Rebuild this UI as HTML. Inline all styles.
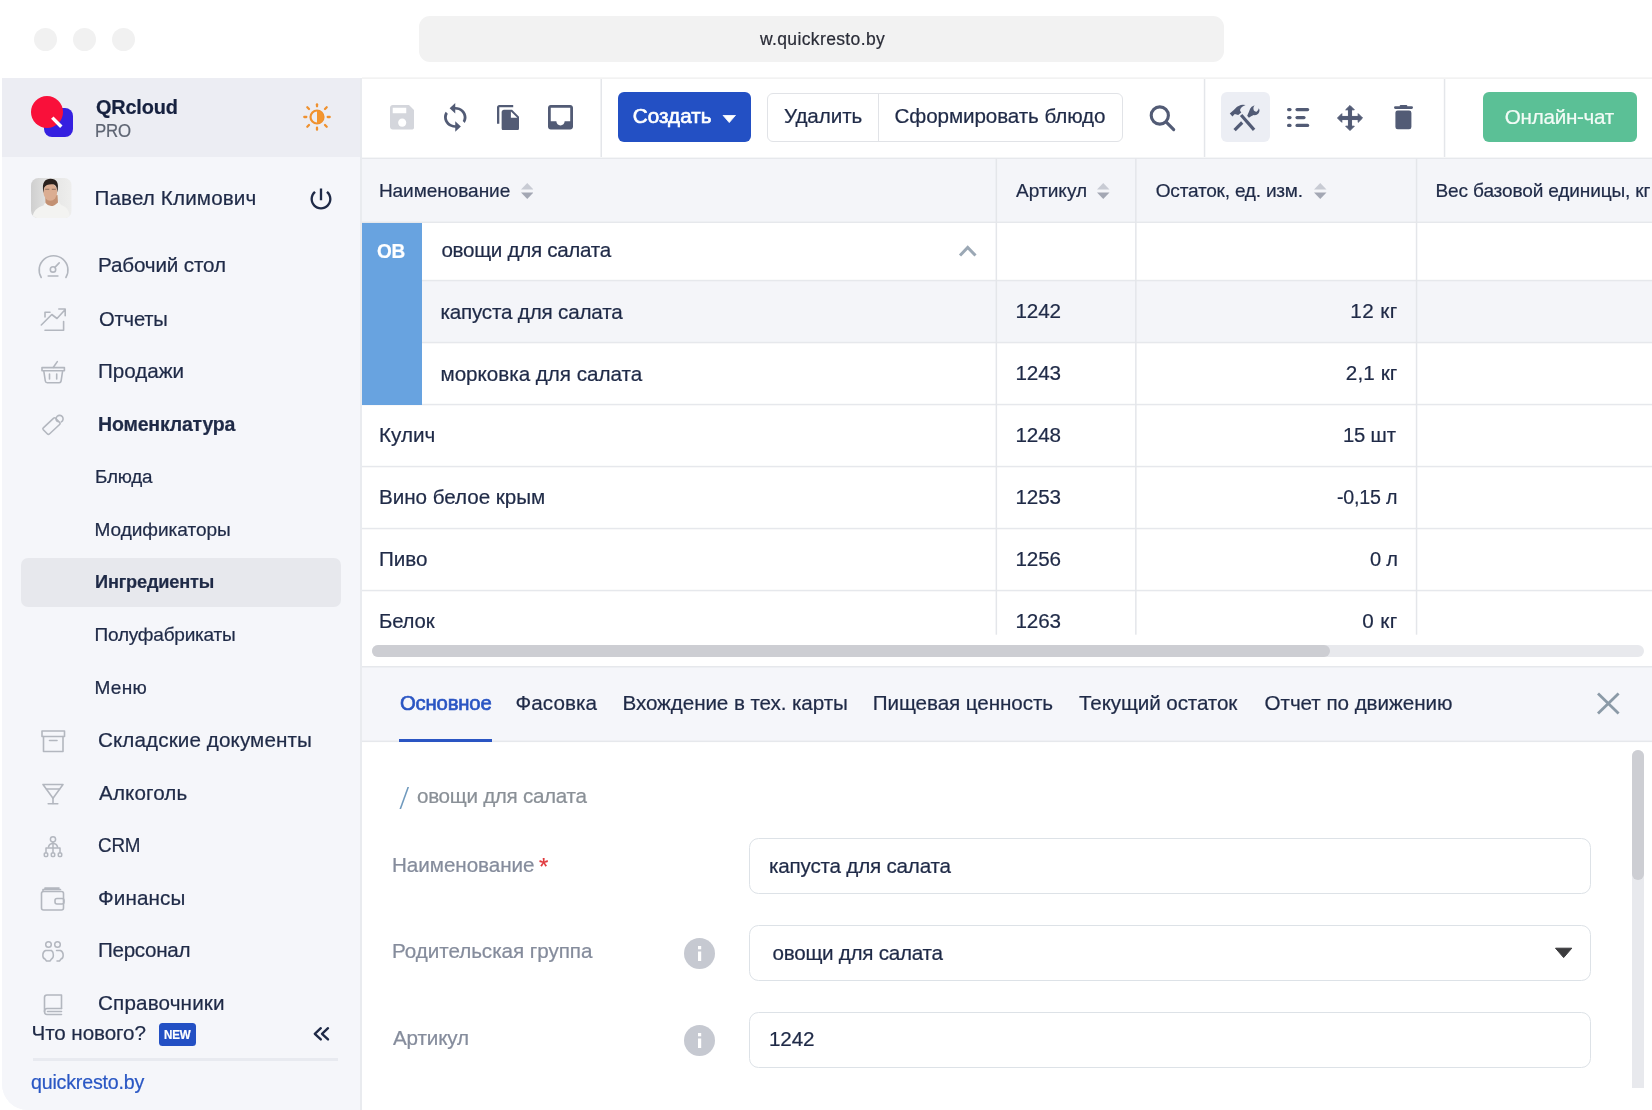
<!DOCTYPE html>
<html lang="ru">
<head>
<meta charset="utf-8">
<title>QRcloud PRO — Ингредиенты</title>
<style>
html,body{margin:0;padding:0;background:#fff;}
body{width:1652px;height:1110px;overflow:hidden;font-family:"Liberation Sans",sans-serif;}
#page{position:relative;width:1652px;height:1110px;overflow:hidden;background:#fff;}
#page div,#page svg{position:absolute;box-sizing:border-box;}
.t{position:absolute;transform-origin:0 50%;-webkit-text-stroke:0.22px currentColor;white-space:pre;line-height:1;font-family:"Liberation Sans",sans-serif;}
.dot{width:23px;height:23px;border-radius:50%;background:#f1f1f1;top:28px;}
.hl{background:#e6e8ec;}
.vl{background:#e4e6ea;width:1.5px;}
.inp{left:749.1px;width:842px;height:55.8px;border:1.5px solid #dde2e7;border-radius:9.5px;background:#fff;}
.info{width:31px;height:31px;border-radius:50%;background:#c6c9d1;}
#page #txt{left:0;top:0;width:1652px;height:1110px;will-change:transform;}

</style>
</head>
<body>
<div id="page">
<!-- browser chrome -->
<div class="dot" style="left:34.25px"></div>
<div class="dot" style="left:73px"></div>
<div class="dot" style="left:111.5px"></div>
<div style="left:419px;top:15.5px;width:805px;height:46.5px;border-radius:11px;background:#f2f2f2"></div>

<!-- sidebar -->
<div style="left:2px;top:78px;width:358px;height:1032px;background:#f5f6fa;border-bottom-left-radius:26px"></div>
<div style="left:2px;top:78px;width:358px;height:78.8px;background:#ecedf3"></div>
<div style="left:360px;top:78px;width:2px;height:1032px;background:#e9ebef"></div>
<!-- logo -->
<div style="left:44px;top:108.2px;width:28.6px;height:29.2px;border-radius:8px;background:#3520e0"></div>
<div style="left:30.6px;top:95.8px;width:32px;height:32px;border-radius:50%;background:#f9103a"></div>
<svg style="left:30px;top:90px" width="50" height="50" viewBox="30 90 50 50"><line x1="52.3" y1="117.6" x2="61.3" y2="126.8" stroke="#fff" stroke-width="3.4" stroke-linecap="butt"/></svg>
<!-- sun -->
<svg style="left:300px;top:100px" width="34" height="34" viewBox="-17 -17 34 34">
 <g stroke="#ef912f" stroke-width="2.300" stroke-linecap="round" fill="none">
  <line x1="0" y1="-10.700" x2="0" y2="-12.700"/><line x1="0" y1="10.700" x2="0" y2="12.700"/>
  <line x1="-10.700" y1="0" x2="-12.700" y2="0"/><line x1="10.700" y1="0" x2="12.700" y2="0"/>
  <line x1="8" y1="-8" x2="9.700" y2="-9.700"/><line x1="-8" y1="-8" x2="-9.700" y2="-9.700"/>
  <line x1="8" y1="8" x2="9.700" y2="9.700"/><line x1="-8" y1="8" x2="-9.700" y2="9.700"/>
 </g>
 <circle cx="0" cy="0" r="6.5" fill="none" stroke="#ef912f" stroke-width="2.2"/>
 <path d="M0 -6.5A6.5 6.5 0 0 1 0 6.5Z" fill="#f3952f"/>
</svg>
<!-- avatar -->
<svg style="left:31.400px;top:177.900px" width="40.700" height="40.200" viewBox="0 0 40.700 40.200">
 <defs><clipPath id="av"><rect x="0" y="0" width="40.700" height="40.200" rx="7.500"/></clipPath>
 <linearGradient id="avbg" x1="0" y1="0" x2="1" y2="0"><stop offset="0" stop-color="#cfcfcf"/><stop offset="0.450" stop-color="#e4e4e3"/><stop offset="1" stop-color="#eeeeed"/></linearGradient></defs>
 <g clip-path="url(#av)">
  <rect width="40.700" height="40.200" fill="url(#avbg)"/>
  <path d="M1.500 40.200C2 33 6 29.500 12.500 27.500L14.500 24L27.500 23L30 27C36 29 38.500 33 39 40.200Z" fill="#f3f3f1"/>
  <path d="M14.300 18L14.500 25Q20 31.500 27 24.500L26.500 17Z" fill="#c39173"/>
  <ellipse cx="19.300" cy="14" rx="6.900" ry="8.700" fill="#dbad92"/>
  <path d="M12.500 15C10.300 4 14.500 0.800 19.500 0.800C25.500 0.800 28.500 4.500 26.300 14.500C26.200 9.500 24.800 6.600 22 6.300C18 6 14.500 6.800 13 10Z" fill="#2a211e"/>
  <path d="M14.200 11.300H18.300M20.800 11.300H24.800" stroke="#8a6a58" stroke-width="0.900"/>
 </g>
</svg>
<!-- power -->
<svg style="left:306.5px;top:185px" width="28" height="28" viewBox="0 0 24 24"><path fill="#1f2a47" d="M13 3h-2v10h2V3zm4.830 2.170l-1.420 1.420C17.990 7.860 19 9.810 19 12c0 3.870-3.130 7-7 7s-7-3.130-7-7c0-2.190 1.010-4.140 2.580-5.420L6.170 5.170C4.230 6.820 3 9.260 3 12c0 4.970 4.030 9 9 9s9-4.030 9-9c0-2.740-1.230-5.180-3.170-6.830z"/></svg>

<!-- sidebar icons -->
<svg style="left:36px;top:252px" width="36" height="28" viewBox="36 252 36 28" fill="none" stroke="#b3b7bf" stroke-width="1.600" stroke-linecap="round">
 <path d="M41.200 277.500A14.400 14.400 0 1 1 65.900 277.500"/>
 <circle cx="53" cy="269.400" r="2.700"/><line x1="54.900" y1="267.400" x2="59.200" y2="262.900"/><line x1="48.200" y1="276" x2="57.900" y2="276"/>
</svg>
<svg style="left:38px;top:304px" width="32" height="30" viewBox="38 304 32 30" fill="none" stroke="#b3b7bf" stroke-width="1.600" stroke-linecap="round" stroke-linejoin="round">
 <path d="M41.300 325L51.800 314.500L57 318.500L64.800 310M58.800 309H65.200V315.800"/>
 <path d="M45 330.200H63.600V321.500"/><path d="M45 317V312.200H50"/>
</svg>
<svg style="left:38px;top:358px" width="32" height="30" viewBox="38 358 32 30" fill="none" stroke="#b3b7bf" stroke-width="1.600" stroke-linecap="round" stroke-linejoin="round">
 <path d="M42 367.600H64.400V370.800H42Z"/><path d="M43.800 371L45.300 381C45.500 382.200 46 382.700 47.200 382.700H59.200C60.400 382.700 60.900 382.200 61.100 381L62.600 371"/>
 <line x1="49.500" y1="374" x2="49.500" y2="379"/><line x1="56.700" y1="374" x2="56.700" y2="379"/><line x1="53.400" y1="367.300" x2="57.300" y2="361.600"/>
</svg>
<svg style="left:38px;top:410px" width="32" height="30" viewBox="38 410 32 30" fill="none" stroke="#b3b7bf" stroke-width="1.600" stroke-linecap="round" stroke-linejoin="round">
 <path d="M43.300 427.800L53.700 418.200Q54.700 417.300 55.600 418.200L59.700 422.600Q60.600 423.600 59.600 424.500L49.400 434Q48.400 434.900 47.500 434L43.300 429.700Q42.400 428.700 43.300 427.800Z"/>
 <path d="M57.300 421.500A3.500 3.500 0 1 1 61.300 421.900"/>
</svg>
<svg style="left:38px;top:726px" width="32" height="30" viewBox="38 726 32 30" fill="none" stroke="#b3b7bf" stroke-width="1.6" stroke-linecap="round" stroke-linejoin="round">
 <rect x="42" y="731" width="22.500" height="5.500"/><path d="M43.500 736.500V751.500H63V736.500"/><line x1="49.500" y1="740.500" x2="57" y2="740.500"/>
</svg>
<svg style="left:38px;top:780px" width="32" height="30" viewBox="38 780 32 30" fill="none" stroke="#b3b7bf" stroke-width="1.600" stroke-linecap="round" stroke-linejoin="round">
 <path d="M43 784.500H63L53 798.300Z"/><line x1="53" y1="798.300" x2="53" y2="803.500"/><line x1="48.200" y1="803.800" x2="57.800" y2="803.800"/><line x1="46.500" y1="789" x2="59.500" y2="789"/>
</svg>
<svg style="left:38px;top:832px" width="32" height="30" viewBox="38 832 32 30" fill="none" stroke="#b3b7bf" stroke-width="1.500" stroke-linecap="round" stroke-linejoin="round">
 <circle cx="53" cy="839.300" r="2.600"/><path d="M53 842V848M46 852.500V848H60V852.500M53 848V852.500"/>
 <path d="M48.500 847C49 844.500 51 843.500 53 843.500C55 843.500 57 844.500 57.500 847"/>
 <rect x="44.300" y="853" width="3.400" height="3.400" rx="0.800"/><rect x="51.300" y="853" width="3.400" height="3.400" rx="0.800"/><rect x="58.300" y="853" width="3.400" height="3.400" rx="0.800"/>
</svg>
<svg style="left:38px;top:884px" width="32" height="30" viewBox="38 884 32 30" fill="none" stroke="#b3b7bf" stroke-width="1.600" stroke-linecap="round" stroke-linejoin="round">
 <rect x="41.500" y="891.500" width="22" height="18.500" rx="2"/><path d="M43 891.500V889.500H60.500M45 889.500V888H59"/>
 <rect x="55" y="898.500" width="9" height="5.500" rx="2"/>
</svg>
<svg style="left:38px;top:937px" width="32" height="30" viewBox="38 937 32 30" fill="none" stroke="#b3b7bf" stroke-width="1.500" stroke-linecap="round" stroke-linejoin="round">
 <circle cx="48.500" cy="944.500" r="2.800"/><circle cx="57.500" cy="944.500" r="2.800"/>
 <path d="M45 959C42 958 42 952 45.500 950.500H51.500C54 952 54 958 51.500 959L50 961H46.500Z"/>
 <path d="M56.500 950.500H60.500C64 952 64 958 61 959L59.500 961H57"/>
</svg>
<svg style="left:38px;top:990px" width="32" height="30" viewBox="38 990 32 30" fill="none" stroke="#b3b7bf" stroke-width="1.600" stroke-linecap="round" stroke-linejoin="round">
 <path d="M61.500 1008.500V995H47C45.500 995 44.500 996 44.500 997.500V1011.500"/><path d="M61.500 1008.500H47C43.700 1008.500 43.700 1014.500 47 1014.500H61.500M47.500 1011.500H61.500"/>
</svg>
<!-- active submenu highlight -->
<div style="left:21px;top:558px;width:320px;height:49px;border-radius:7px;background:#e7e8ed"></div>
<!-- sidebar footer -->
<div style="left:2px;top:1016px;width:358px;height:94px;background:#f5f6fa;border-bottom-left-radius:26px"></div>
<div style="left:158.500px;top:1023px;width:37.300px;height:22.800px;border-radius:3.500px;background:#2350c4"></div>
<svg style="left:310px;top:1023px" width="24" height="22" viewBox="310 1023 24 22" fill="none" stroke="#1f2a47" stroke-width="2.400" stroke-linecap="round" stroke-linejoin="round">
 <path d="M320.800 1028.200L314.800 1033.800L320.800 1039.400"/><path d="M328 1028.200L322 1033.800L328 1039.400"/>
</svg>
<div style="left:32.500px;top:1058.300px;width:305px;height:2.600px;background:#e8eaf0"></div>

<!-- toolbar -->
<!-- save (disabled) : material bbox 3..21 -->
<svg style="left:389.600px;top:105px" width="24.400" height="24.500" viewBox="3 3 18 18" preserveAspectRatio="none"><path fill="#d4d6dc" d="M17 3H5c-1.110 0-2 .9-2 2v14c0 1.100.890 2 2 2h14c1.100 0 2-.9 2-2V7l-4-4zm-5 16c-1.660 0-3-1.340-3-3s1.340-3 3-3 3 1.340 3 3-1.340 3-3 3zm3-10H5V5h10v4z"/></svg>
<!-- sync : bbox x4..20 y1..23 -->
<svg style="left:444px;top:103.300px" width="22.500" height="28.700" viewBox="4 1 16 22" preserveAspectRatio="none"><path fill="#525b75" d="M12 4V1L8 5l4 4V6c3.310 0 6 2.690 6 6 0 1.010-.25 1.970-.7 2.800l1.460 1.460C19.540 15.030 20 13.570 20 12c0-4.420-3.580-8-8-8zm0 14c-3.310 0-6-2.690-6-6 0-1.010.25-1.970.7-2.800L5.240 7.740C4.460 8.970 4 10.430 4 12c0 4.420 3.580 8 8 8v3l4-4-4-4v3z"/></svg>
<!-- file copy : bbox x2..21 y1..23 -->
<svg style="left:497.200px;top:104.600px" width="22" height="25.700" viewBox="2 1 19 22" preserveAspectRatio="none"><path fill="#525b75" d="M16 1H4c-1.100 0-2 .9-2 2v14h2V3h12V1zm-1 4l6 6v10c0 1.100-.9 2-2 2H7.990C6.890 23 6 22.100 6 21l.010-14c0-1.100.890-2 1.990-2h7zm-1 7h5.500L14 6.500V12z"/></svg>
<!-- inbox : bbox 3..21 -->
<svg style="left:547.500px;top:105px" width="25" height="24.500" viewBox="3 3 18 18" preserveAspectRatio="none"><path fill="#525b75" d="M19 3H4.990c-1.110 0-1.980.9-1.980 2L3 19c0 1.100.880 2 1.990 2H19c1.100 0 2-.9 2-2V5c0-1.100-.9-2-2-2zm0 12h-4c0 1.660-1.350 3-3 3s-3-1.340-3-3H4.990V5H19v10z"/></svg>
<!-- create button -->
<div style="left:617.500px;top:92px;width:133.200px;height:50px;border-radius:6px;background:#2350c4"></div>
<svg style="left:721.500px;top:114.500px" width="14.500" height="8" viewBox="0 0 14.500 8"><path d="M1 0.300H13.500L7.250 7.600Z" fill="#fff" stroke="#fff" stroke-width="0.800" stroke-linejoin="round"/></svg>
<!-- button group -->
<div style="left:767px;top:93px;width:355.500px;height:48.800px;border:1.500px solid #e1e3e7;border-radius:6px;background:#fff"></div>
<div style="left:877.700px;top:93.500px;width:1.400px;height:48px;background:#e1e3e7"></div>
<!-- search : -->
<svg style="left:1146px;top:102px" width="32" height="32" viewBox="1146 102 32 32" fill="none" stroke="#525b75" stroke-width="3.100" stroke-linecap="round"><circle cx="1159.800" cy="115.500" r="8.600"/><line x1="1166.300" y1="122.200" x2="1173.700" y2="129.700"/></svg>
<!-- tools bg + icon -->
<div style="left:1220.600px;top:92px;width:49.400px;height:50px;border-radius:6px;background:#eceef4"></div>
<svg style="left:1222px;top:98px" width="46" height="40" viewBox="1222 98 46 40" fill="#525b75" stroke="none">
 <path d="M1229.750 113.500L1232.450 116.500L1234.800 114L1238.200 115L1241.300 112.400Q1239.500 110.500 1240.200 109.500Q1241 107 1245.600 105.100Q1243 104.600 1240.750 105Q1237 106 1233.500 110.200Z"/>
 <path d="M1247.200 115.700Q1249 112 1250.100 108.800Q1251 106.500 1254.600 105.200Q1252.800 107.500 1253.400 108.800Q1253.600 110.500 1254.400 111Q1255.500 111.900 1256.600 111.700Q1258.300 111 1258.800 108.300Q1260 110 1259.300 111.700Q1258.800 113.500 1257.500 114.200Q1256 115.300 1253.700 115.100Q1251 116.200 1248.900 117.800Z"/>
 <g stroke="#525b75" stroke-width="3.200" stroke-linecap="butt"><line x1="1241.100" y1="115" x2="1254.100" y2="129.900"/><line x1="1234.600" y1="130.100" x2="1242.200" y2="122.500"/></g>
</svg>
<!-- list icon -->
<svg style="left:1286px;top:106px" width="25" height="24" viewBox="1286 106 25 24" fill="none" stroke="#525b75" stroke-width="3.200" stroke-linecap="round">
 <line x1="1288.600" y1="109.600" x2="1290" y2="109.600"/><line x1="1297" y1="109.600" x2="1307.600" y2="109.600"/>
 <line x1="1288.600" y1="117.600" x2="1290" y2="117.600"/><line x1="1297" y1="117.600" x2="1304" y2="117.600"/>
 <line x1="1288.600" y1="125.400" x2="1290" y2="125.400"/><line x1="1297" y1="125.400" x2="1307.600" y2="125.400"/>
</svg>
<!-- move icon -->
<svg style="left:1334.900px;top:102.900px" width="30" height="30" viewBox="-15 -15 30 30">
 <g fill="#525b75" stroke="#525b75" stroke-width="1" stroke-linejoin="round">
  <rect x="-9" y="-1.550" width="18" height="3.100"/><rect x="-1.550" y="-9" width="3.100" height="18"/>
  <path d="M0 -12.500L4.300 -8.200H-4.300Z"/><path d="M0 12.500L4.300 8.200H-4.300Z"/><path d="M-12.500 0L-8.200 -4.300V4.300Z"/><path d="M12.500 0L8.200 -4.300V4.300Z"/>
 </g>
</svg>
<!-- trash : bbox x5..19 y3..21 -->
<svg style="left:1390px;top:102px" width="28" height="30" viewBox="1390 102 28 30" fill="#525b75">
 <rect x="1394" y="106.200" width="19" height="2.700" rx="1.350"/><rect x="1399.700" y="104.900" width="7.600" height="2.600" rx="1"/>
 <rect x="1395.400" y="110.500" width="16" height="18.800" rx="2.300"/>
</svg>
<!-- chat button -->
<div style="left:1482.600px;top:92px;width:154.800px;height:50px;border-radius:6px;background:#5bc096"></div>

<!-- table -->
<div style="left:362px;top:158.800px;width:1290px;height:63.300px;background:#f4f5f9"></div>
<div style="left:362px;top:281px;width:1290px;height:61.500px;background:#f4f5f9"></div>
<!-- sort icons -->
<svg style="left:520.500px;top:183px" width="12.500" height="16" viewBox="0 0 12.500 16"><path d="M6.250 0L12.500 6.500H0Z" fill="#c8cbd4"/><path d="M6.250 16L12.500 9.500H0Z" fill="#a3a7b4"/></svg>
<svg style="left:1097.300px;top:183px" width="12.500" height="16" viewBox="0 0 12.500 16"><path d="M6.250 0L12.500 6.500H0Z" fill="#c8cbd4"/><path d="M6.250 16L12.500 9.500H0Z" fill="#a3a7b4"/></svg>
<svg style="left:1314.300px;top:183px" width="12.500" height="16" viewBox="0 0 12.500 16"><path d="M6.250 0L12.500 6.500H0Z" fill="#c8cbd4"/><path d="M6.250 16L12.500 9.500H0Z" fill="#a3a7b4"/></svg>
<!-- chevron up -->
<svg style="left:956px;top:241px" width="24" height="20" viewBox="956 241 24 20" fill="none" stroke="#9ba8b5" stroke-width="3" stroke-linecap="butt" stroke-linejoin="miter"><path d="M960 255.500L967.700 247.500L975.500 255.500"/></svg>
<!-- h scrollbar -->
<div style="left:372px;top:645px;width:1271.500px;height:12px;border-radius:6px;background:#e8e9ed"></div>
<div style="left:372px;top:645px;width:958.300px;height:12px;border-radius:6px;background:#cdced3"></div>

<!-- tabs -->
<div style="left:362px;top:666.500px;width:1290px;height:75px;background:#f5f6fa"></div>
<!-- hairlines (svg so that fractional positions antialias) -->
<svg style="left:0;top:0" width="1652" height="1110" viewBox="0 0 1652 1110">
 <rect x="362.00" y="77.50" width="1290.00" height="1.20" fill="#ededed"/>
 <rect x="362.00" y="157.60" width="1290.00" height="1.40" fill="#e6e8ec"/>
 <rect x="600.50" y="79.00" width="1.50" height="78.00" fill="#e4e6ea"/>
 <rect x="1203.80" y="79.00" width="1.50" height="78.00" fill="#e4e6ea"/>
 <rect x="1443.80" y="79.00" width="1.50" height="78.00" fill="#e4e6ea"/>
 <rect x="362.00" y="221.60" width="1290.00" height="1.40" fill="#e6e8ec"/>
 <rect x="422.00" y="279.80" width="1230.00" height="1.50" fill="#e6e8ec"/>
 <rect x="422.00" y="341.80" width="1230.00" height="1.50" fill="#e6e8ec"/>
 <rect x="362.00" y="403.80" width="1290.00" height="1.50" fill="#e6e8ec"/>
 <rect x="362.00" y="465.80" width="1290.00" height="1.50" fill="#e6e8ec"/>
 <rect x="362.00" y="527.80" width="1290.00" height="1.50" fill="#e6e8ec"/>
 <rect x="362.00" y="589.80" width="1290.00" height="1.50" fill="#e6e8ec"/>
 <rect x="995.60" y="158.40" width="1.50" height="476.30" fill="#e4e6ea"/>
 <rect x="1135.10" y="158.40" width="1.50" height="476.30" fill="#e4e6ea"/>
 <rect x="1415.80" y="158.40" width="1.50" height="476.30" fill="#e4e6ea"/>
 <rect x="362.00" y="666.00" width="1290.00" height="1.50" fill="#e6e8ec"/>
 <rect x="362.00" y="740.60" width="1290.00" height="1.50" fill="#e6e8ec"/>
</svg>
<div style="left:362px;top:222.600px;width:60px;height:182.200px;background:#68a3e0"></div>
<div style="left:399px;top:738.800px;width:92.800px;height:3.200px;background:#2a55c3"></div>
<svg style="left:1594px;top:689px" width="28" height="28" viewBox="1594 689 28 28" fill="none" stroke="#8b9aa7" stroke-width="2.800" stroke-linecap="butt"><line x1="1598" y1="693.400" x2="1618.600" y2="713.400"/><line x1="1618.600" y1="693.400" x2="1598" y2="713.400"/></svg>

<!-- form -->
<div class="inp" style="top:838px"></div>
<div class="inp" style="top:925px"></div>
<div class="inp" style="top:1012px"></div>
<svg style="left:1554px;top:946px" width="20" height="14" viewBox="1554 946 20 14"><path d="M1555.500 948.200H1571.800L1563.650 957.600Z" fill="#3b3b3d" stroke="#3b3b3d" stroke-width="1" stroke-linejoin="round"/></svg>
<div class="info" style="left:684px;top:937.500px"></div>
<div class="info" style="left:684px;top:1024.500px"></div>
<svg style="left:684px;top:937.500px" width="31" height="31" viewBox="0 0 31 31"><rect x="14" y="13.500" width="3.200" height="9.500" fill="#fff"/><rect x="14" y="8" width="3.200" height="3.300" fill="#fff"/></svg>
<svg style="left:684px;top:1024.500px" width="31" height="31" viewBox="0 0 31 31"><rect x="14" y="13.500" width="3.200" height="9.500" fill="#fff"/><rect x="14" y="8" width="3.200" height="3.300" fill="#fff"/></svg>
<!-- v scrollbar -->
<div style="left:1631.500px;top:750px;width:12px;height:338px;border-radius:6px 6px 0 0;background:#e8e9ed"></div>
<div style="left:1631.500px;top:750px;width:12px;height:129.500px;border-radius:6px;background:#cdced3"></div>

<!-- text layer -->
<div id="txt">
<span class="t" style="top:31.12px;font-size:17.5px;color:#2b2d38;letter-spacing:0.365px;left:760.00px;">w.quickresto.by</span>
<span class="t" style="top:96.40px;font-size:21px;color:#16213f;letter-spacing:-0.200px;font-weight:bold;left:95.50px;transform:scaleX(0.9477);">QRcloud</span>
<span class="t" style="top:121.05px;font-size:19.06px;color:#5d6472;letter-spacing:-0.200px;left:94.62px;transform:scaleX(0.8833);">PRO</span>
<span class="t" style="top:188.45px;font-size:20.65px;color:#1f2a47;letter-spacing:0.124px;left:94.50px;">Павел Климович</span>
<span class="t" style="top:255.45px;font-size:20.65px;color:#1f2a47;letter-spacing:-0.139px;left:98.00px;">Рабочий стол</span>
<span class="t" style="top:308.70px;font-size:20.65px;color:#1f2a47;letter-spacing:-0.200px;left:99.00px;transform:scaleX(0.9783);">Отчеты</span>
<span class="t" style="top:361.45px;font-size:20.65px;color:#1f2a47;letter-spacing:-0.028px;left:98.00px;">Продажи</span>
<span class="t" style="top:414.45px;font-size:20.65px;color:#1f2a47;letter-spacing:-0.200px;font-weight:bold;left:98.05px;transform:scaleX(0.9457);">Номенклатура</span>
<span class="t" style="top:729.95px;font-size:20.65px;color:#1f2a47;letter-spacing:0.099px;left:98.00px;">Складские документы</span>
<span class="t" style="top:782.95px;font-size:20.65px;color:#1f2a47;letter-spacing:0.115px;left:99.00px;">Алкоголь</span>
<span class="t" style="top:835.45px;font-size:20.65px;color:#1f2a47;letter-spacing:-0.200px;left:98.09px;transform:scaleX(0.9119);">CRM</span>
<span class="t" style="top:887.95px;font-size:20.65px;color:#1f2a47;letter-spacing:0.114px;left:98.00px;">Финансы</span>
<span class="t" style="top:940.45px;font-size:20.65px;color:#1f2a47;letter-spacing:-0.315px;left:98.00px;">Персонал</span>
<span class="t" style="top:993.35px;font-size:20.65px;color:#1f2a47;letter-spacing:0.149px;left:98.00px;">Справочники</span>
<span class="t" style="top:467.30px;font-size:19.06px;color:#1f2a47;letter-spacing:-0.200px;left:94.51px;transform:scaleX(0.9899);">Блюда</span>
<span class="t" style="top:520.05px;font-size:19.06px;color:#1f2a47;letter-spacing:-0.040px;left:94.50px;">Модификаторы</span>
<span class="t" style="top:572.30px;font-size:19.06px;color:#1f2a47;letter-spacing:-0.200px;font-weight:bold;left:94.55px;transform:scaleX(0.9545);">Ингредиенты</span>
<span class="t" style="top:625.20px;font-size:19.06px;color:#1f2a47;letter-spacing:-0.237px;left:94.50px;">Полуфабрикаты</span>
<span class="t" style="top:678.05px;font-size:19.06px;color:#1f2a47;letter-spacing:0.269px;left:94.50px;">Меню</span>
<span class="t" style="top:106.45px;font-size:20.65px;color:#fff;letter-spacing:0.036px;left:632.80px;-webkit-text-stroke:0.65px #fff;">Создать</span>
<span class="t" style="top:106.45px;font-size:20.65px;color:#1f2a47;letter-spacing:-0.091px;left:784.00px;">Удалить</span>
<span class="t" style="top:106.45px;font-size:20.65px;color:#1f2a47;letter-spacing:-0.102px;left:894.50px;">Сформировать блюдо</span>
<span class="t" style="top:106.55px;font-size:20.65px;color:#f2fbf6;letter-spacing:-0.284px;left:1504.80px;">Онлайн-чат</span>
<span class="t" style="top:180.50px;font-size:19.06px;color:#1f2a47;letter-spacing:-0.058px;left:378.90px;">Наименование</span>
<span class="t" style="top:180.50px;font-size:19.06px;color:#1f2a47;letter-spacing:0.018px;left:1016.00px;">Артикул</span>
<span class="t" style="top:180.50px;font-size:19.06px;color:#1f2a47;letter-spacing:-0.211px;left:1155.75px;">Остаток, ед. изм.</span>
<span class="t" style="top:180.50px;font-size:19.06px;color:#1f2a47;letter-spacing:-0.141px;left:1435.50px;">Вес базовой единицы,</span>
<span class="t" style="top:180.50px;font-size:19.06px;color:#1f2a47;left:1635.20px;">кг</span>
<span class="t" style="top:240.95px;font-size:20.65px;color:#fff;letter-spacing:-0.200px;font-weight:bold;left:376.80px;transform:scaleX(0.9211);">ОВ</span>
<span class="t" style="top:240.25px;font-size:20.65px;color:#1f2a47;letter-spacing:-0.315px;left:441.40px;">овощи для салата</span>
<span class="t" style="top:301.55px;font-size:20.65px;color:#1f2a47;letter-spacing:-0.193px;left:440.40px;">капуста для салата</span>
<span class="t" style="top:364.25px;font-size:20.65px;color:#1f2a47;letter-spacing:-0.025px;left:440.50px;">морковка для салата</span>
<span class="t" style="top:424.95px;font-size:20.65px;color:#1f2a47;letter-spacing:0.009px;left:379.00px;">Кулич</span>
<span class="t" style="top:486.95px;font-size:20.65px;color:#1f2a47;letter-spacing:-0.043px;left:379.00px;">Вино белое крым</span>
<span class="t" style="top:548.95px;font-size:20.65px;color:#1f2a47;letter-spacing:-0.033px;left:379.00px;">Пиво</span>
<span class="t" style="top:610.95px;font-size:20.65px;color:#1f2a47;letter-spacing:-0.200px;left:379.01px;transform:scaleX(0.9859);">Белок</span>
<span class="t" style="top:300.95px;font-size:20.65px;color:#1f2a47;letter-spacing:-0.146px;left:1015.50px;">1242</span>
<span class="t" style="top:362.95px;font-size:20.65px;color:#1f2a47;letter-spacing:-0.146px;left:1015.50px;">1243</span>
<span class="t" style="top:424.95px;font-size:20.65px;color:#1f2a47;letter-spacing:-0.146px;left:1015.50px;">1248</span>
<span class="t" style="top:486.95px;font-size:20.65px;color:#1f2a47;letter-spacing:-0.146px;left:1015.50px;">1253</span>
<span class="t" style="top:548.95px;font-size:20.65px;color:#1f2a47;letter-spacing:-0.146px;left:1015.50px;">1256</span>
<span class="t" style="top:610.95px;font-size:20.65px;color:#1f2a47;letter-spacing:-0.146px;left:1015.50px;">1263</span>
<span class="t" style="top:300.95px;font-size:20.65px;color:#1f2a47;letter-spacing:0.444px;left:1350.30px;">12 кг</span>
<span class="t" style="top:362.95px;font-size:20.65px;color:#1f2a47;letter-spacing:0.108px;left:1345.80px;">2,1 кг</span>
<span class="t" style="top:424.95px;font-size:20.65px;color:#1f2a47;letter-spacing:-0.200px;left:1343.32px;transform:scaleX(0.9822);">15 шт</span>
<span class="t" style="top:486.95px;font-size:20.65px;color:#1f2a47;letter-spacing:-0.200px;left:1337.30px;transform:scaleX(0.9508);">-0,15 л</span>
<span class="t" style="top:548.95px;font-size:20.65px;color:#1f2a47;letter-spacing:-0.200px;left:1369.80px;transform:scaleX(0.9707);">0 л</span>
<span class="t" style="top:610.95px;font-size:20.65px;color:#1f2a47;letter-spacing:0.419px;left:1362.30px;">0 кг</span>
<span class="t" style="top:692.95px;font-size:20.65px;color:#2a55c3;letter-spacing:-0.200px;left:399.60px;transform:scaleX(0.9839);-webkit-text-stroke:0.65px #2a55c3;">Основное</span>
<span class="t" style="top:692.95px;font-size:20.65px;color:#1f2a47;letter-spacing:0.058px;left:515.50px;">Фасовка</span>
<span class="t" style="top:692.95px;font-size:20.65px;color:#1f2a47;letter-spacing:-0.096px;left:622.50px;">Вхождение в тех. карты</span>
<span class="t" style="top:692.95px;font-size:20.65px;color:#1f2a47;letter-spacing:-0.089px;left:872.75px;">Пищевая ценность</span>
<span class="t" style="top:692.95px;font-size:20.65px;color:#1f2a47;letter-spacing:-0.124px;left:1079.00px;">Текущий остаток</span>
<span class="t" style="top:692.95px;font-size:20.65px;color:#1f2a47;letter-spacing:-0.056px;left:1264.50px;">Отчет по движению</span>
<span class="t" style="top:784.35px;font-size:27px;color:#6f99bd;left:399.10px;transform:scaleX(1.16);-webkit-text-stroke:0;font-family:'DejaVu Sans Light','DejaVu Sans',sans-serif;font-weight:200;">/</span>
<span class="t" style="top:785.95px;font-size:20.65px;color:#8a9097;letter-spacing:-0.302px;left:417.00px;">овощи для салата</span>
<span class="t" style="top:854.95px;font-size:20.65px;color:#858c9c;letter-spacing:-0.055px;left:392.00px;">Наименование</span>
<span class="t" style="top:854.60px;font-size:24px;color:#e0393e;left:539.00px;">*</span>
<span class="t" style="top:941.20px;font-size:20.65px;color:#858c9c;letter-spacing:-0.051px;left:392.00px;">Родительская группа</span>
<span class="t" style="top:1027.95px;font-size:20.65px;color:#858c9c;letter-spacing:-0.151px;left:393.00px;">Артикул</span>
<span class="t" style="top:855.95px;font-size:20.65px;color:#1f2a47;letter-spacing:-0.210px;left:769.00px;">капуста для салата</span>
<span class="t" style="top:942.95px;font-size:20.65px;color:#1f2a47;letter-spacing:-0.269px;left:772.50px;">овощи для салата</span>
<span class="t" style="top:1029.45px;font-size:20.65px;color:#1f2a47;letter-spacing:-0.146px;left:769.00px;">1242</span>
<span class="t" style="top:1022.65px;font-size:20.65px;color:#1f2a47;letter-spacing:-0.084px;left:31.50px;">Что нового?</span>
<span class="t" style="top:1029.49px;font-size:12.6px;color:#fff;letter-spacing:-0.200px;font-weight:bold;left:163.75px;transform:scaleX(0.9194);">NEW</span>
<span class="t" style="top:1071.95px;font-size:20.65px;color:#2a57c4;letter-spacing:-0.200px;left:31.00px;transform:scaleX(0.9509);">quickresto.by</span>
</div>
</div>
</body>
</html>
